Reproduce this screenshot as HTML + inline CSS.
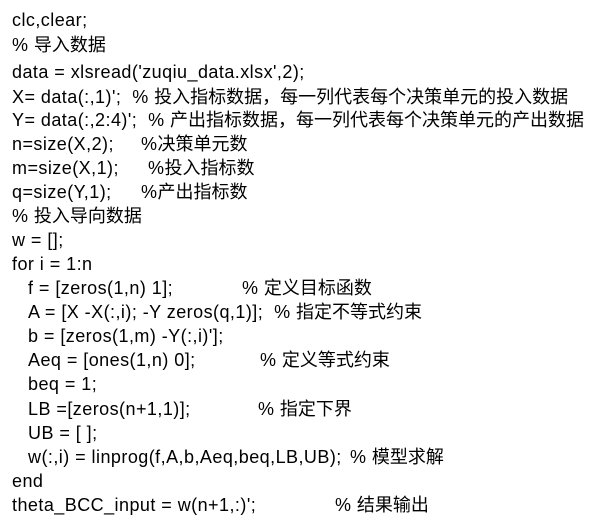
<!DOCTYPE html>
<html><head><meta charset="utf-8"><style>
body{margin:0;background:#fff;width:593px;height:528px;overflow:hidden;position:relative;font-family:"Liberation Sans","Noto Sans CJK SC",sans-serif;font-size:18px;letter-spacing:0.45px;color:#000}
div{position:absolute;white-space:pre;line-height:24px}
.c{letter-spacing:0}
</style></head><body>
<div style="left:12px;top:8px">clc,clear;</div>
<div style="left:12px;top:33px">% <span class="c">导入数据</span></div>
<div style="left:12px;top:60px">data = xlsread('zuqiu_data.xlsx',2);</div>
<div style="left:12px;top:85px">X= data(:,1)';  % <span class="c">投入指标数据，每一列代表每个决策单元的投入数据</span></div>
<div style="left:12px;top:108px">Y= data(:,2:4)';  % <span class="c">产出指标数据，每一列代表每个决策单元的产出数据</span></div>
<div style="left:12px;top:132px">n=size(X,2);</div><div style="left:141px;top:132px">%<span class="c">决策单元数</span></div>
<div style="left:12px;top:156px">m=size(X,1);</div><div style="left:148px;top:156px">%<span class="c">投入指标数</span></div>
<div style="left:12px;top:180px">q=size(Y,1);</div><div style="left:141px;top:180px">%<span class="c">产出指标数</span></div>
<div style="left:12px;top:204px">% <span class="c">投入导向数据</span></div>
<div style="left:12px;top:228px">w = [];</div>
<div style="left:12px;top:252px">for i = 1:n</div>
<div style="left:28px;top:276px">f = [zeros(1,n) 1];</div><div style="left:242px;top:276px">% <span class="c">定义目标函数</span></div>
<div style="left:28px;top:300px">A = [X -X(:,i); -Y zeros(q,1)];  % <span class="c">指定不等式约束</span></div>
<div style="left:28px;top:324px">b = [zeros(1,m) -Y(:,i)'];</div>
<div style="left:28px;top:348px">Aeq = [ones(1,n) 0];</div><div style="left:260px;top:348px">% <span class="c">定义等式约束</span></div>
<div style="left:28px;top:372px">beq = 1;</div>
<div style="left:28px;top:397px">LB =[zeros(n+1,1)];</div><div style="left:258px;top:397px">% <span class="c">指定下界</span></div>
<div style="left:28px;top:421px">UB = [ ];</div>
<div style="left:28px;top:445px">w(:,i) = linprog(f,A,b,Aeq,beq,LB,UB);</div><div style="left:350px;top:445px">% <span class="c">模型求解</span></div>
<div style="left:12px;top:469px">end</div>
<div style="left:12px;top:493px">theta_BCC_input = w(n+1,:)';</div><div style="left:335px;top:493px">% <span class="c">结果输出</span></div>
</body></html>
